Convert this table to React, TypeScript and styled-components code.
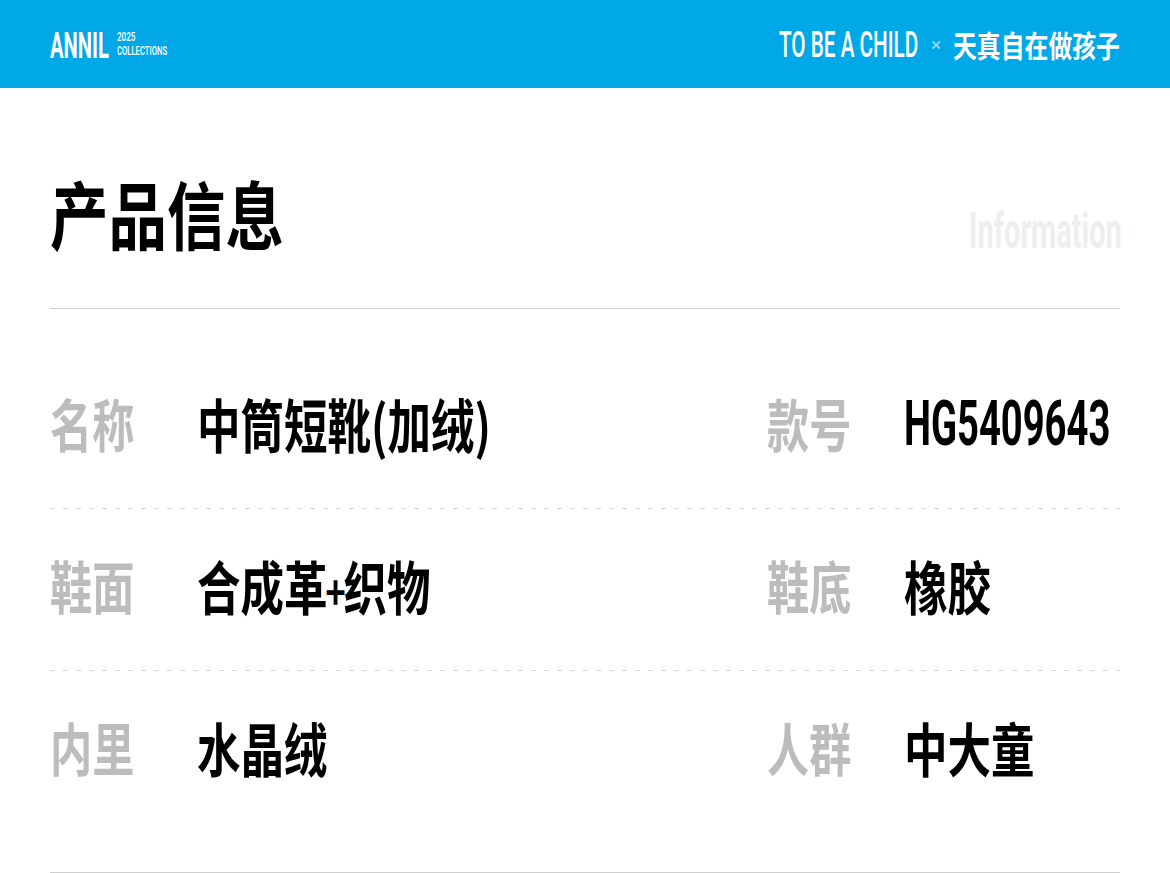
import React from 'react';
import styled, { createGlobalStyle } from 'styled-components';

const cjk = `"Noto Sans CJK SC", "Noto Sans", sans-serif`;
const latin = `Roboto, "Noto Sans CJK SC", sans-serif`;

const GlobalStyle = createGlobalStyle`
  html, body {
    margin: 0;
    padding: 0;
    background: #ffffff;
  }
  body {
    font-family: ${cjk};
    color: #000;
  }
`;

interface Cell {
  label: string;
  value: string;
  code?: boolean;
}

const rows: Cell[][] = [
  [
    { label: '名称', value: '中筒短靴(加绒)' },
    { label: '款号', value: 'HG5409643', code: true },
  ],
  [
    { label: '鞋面', value: '合成革+织物' },
    { label: '鞋底', value: '橡胶' },
  ],
  [
    { label: '内里', value: '水晶绒' },
    { label: '人群', value: '中大童' },
  ],
];

// the "+" in the reference is small and sits tight between the characters
const renderValue = (value: string): React.ReactNode =>
  value.split('+').map((part, i) => (
    <React.Fragment key={i}>
      {i > 0 && <Plus>+</Plus>}
      {part}
    </React.Fragment>
  ));

const App = (): JSX.Element => (
  <>
    <GlobalStyle />
    <Page>
      <Header>
        <Logo>
          <Fit $w={59}>
            <Brand $s={0.56}>ANNIL</Brand>
          </Fit>
          <Edition>
            <Fit $w={20}>
              <EditionLine $s={0.62}>2025</EditionLine>
            </Fit>
            <Fit $w={52}>
              <EditionLine $s={0.59}>COLLECTIONS</EditionLine>
            </Fit>
          </Edition>
        </Logo>
        <Motto>
          <Fit $w={139}>
            <MottoEn $s={0.575}>TO BE A CHILD</MottoEn>
          </Fit>
          <Cross>×</Cross>
          <Fit $w={167}>
            <MottoCn $s={0.795}>天真自在做孩子</MottoCn>
          </Fit>
        </Motto>
      </Header>

      <Main>
        <TitleBar>
          <Title $s={0.79}>产品信息</Title>
          <Fit $w={151}>
            <Ghost $s={0.58}>Information</Ghost>
          </Fit>
        </TitleBar>

        <List>
          {rows.map((row, i) => (
            <Row key={i} $dashed={i < rows.length - 1}>
              {row.map((cell, j) => (
                <Field key={cell.label} $w={j === 0 ? 717 : undefined}>
                  <Label $w={j === 0 ? 147 : 137}>
                    <LabelText $s={0.74}>{cell.label}</LabelText>
                  </Label>
                  {cell.code ? (
                    <Code $s={0.606}>{cell.value}</Code>
                  ) : (
                    <Value $s={0.75}>{renderValue(cell.value)}</Value>
                  )}
                </Field>
              ))}
            </Row>
          ))}
        </List>
        <Closing />
      </Main>
    </Page>
  </>
);

const Page = styled.div`
  width: 1170px;
  height: 873px;
  overflow: hidden;
  background: #fff;
`;

// text drawn narrower than the installed fonts allow
const Squeeze = styled.span<{ $s: number }>`
  display: inline-block;
  white-space: nowrap;
  transform: scaleX(${(p) => p.$s});
  transform-origin: left center;
`;

const Fit = styled.span<{ $w: number }>`
  display: inline-flex;
  flex: none;
  width: ${(p) => p.$w}px;
`;

const Header = styled.header`
  height: 88px;
  box-sizing: border-box;
  padding: 0 50px;
  background: #00a8e8;
  display: flex;
  align-items: center;
  justify-content: space-between;
  color: #fff;
`;

const Logo = styled.div`
  display: flex;
  align-items: center;
  gap: 8px;
`;

const Brand = styled(Squeeze)`
  font-family: ${latin};
  font-weight: 700;
  font-size: 36px;
  line-height: 1;
  margin-top: 3px;
`;

const Edition = styled.div`
  display: flex;
  flex-direction: column;
`;

const EditionLine = styled(Squeeze)`
  font-family: ${latin};
  font-weight: 500;
  font-size: 13px;
  line-height: 14px;
`;

const Motto = styled.div`
  display: flex;
  align-items: center;
`;

const MottoEn = styled(Squeeze)`
  font-family: ${latin};
  font-weight: 500;
  font-size: 36px;
  line-height: 1;
  margin-top: 2px;
`;

const Cross = styled.span`
  width: 12px;
  margin: 0 11px 0 12px;
  font-family: ${latin};
  font-size: 19px;
  line-height: 1;
  color: #9dd7f3;
  text-align: center;
`;

const MottoCn = styled(Squeeze)`
  font-family: ${cjk};
  font-weight: 700;
  font-size: 30px;
  line-height: 1;
`;

const Main = styled.main`
  padding: 0 50px;
`;

const TitleBar = styled.div`
  height: 221px;
  box-sizing: border-box;
  padding-bottom: 59px;
  border-bottom: 1px solid #cfcfcf;
  display: flex;
  align-items: flex-end;
  justify-content: space-between;
`;

const Title = styled(Squeeze)`
  font-family: ${cjk};
  font-weight: 700;
  font-size: 74px;
  line-height: 1;
`;

const Ghost = styled(Squeeze)`
  font-family: ${latin};
  font-weight: 700;
  font-size: 50px;
  line-height: 1;
  color: #eeeeee;
  margin-bottom: -7px;
`;

const List = styled.div`
  padding-top: 38px;
`;

const Row = styled.div<{ $dashed: boolean }>`
  height: 162px;
  box-sizing: border-box;
  padding-bottom: 10px;
  display: flex;
  align-items: center;
  background-image: ${(p) =>
    p.$dashed
      ? 'repeating-linear-gradient(to right, #d4d4d4 0 5px, transparent 5px 13px)'
      : 'none'};
  background-size: 100% 1px;
  background-repeat: no-repeat;
  background-position: left bottom;
`;

const Field = styled.div<{ $w?: number }>`
  display: flex;
  align-items: center;
  flex: ${(p) => (p.$w ? `0 0 ${p.$w}px` : '1 1 auto')};
`;

const Label = styled.div<{ $w: number }>`
  width: ${(p) => p.$w}px;
  flex: none;
`;

const LabelText = styled(Squeeze)`
  font-family: ${cjk};
  font-weight: 700;
  font-size: 57px;
  line-height: 1;
  color: #bcbcbc;
`;

const Value = styled(Squeeze)`
  font-family: ${cjk};
  font-weight: 700;
  font-size: 58px;
  line-height: 1;
  color: #000;
`;

const Plus = styled.span`
  font-size: 0.8em;
  margin: 0 -3px;
`;

const Code = styled(Squeeze)`
  font-family: ${latin};
  font-weight: 700;
  font-size: 63px;
  line-height: 1;
  color: #000;
`;

const Closing = styled.div`
  height: 39px;
  border-bottom: 1px solid #cfcfcf;
`;

export default App;
